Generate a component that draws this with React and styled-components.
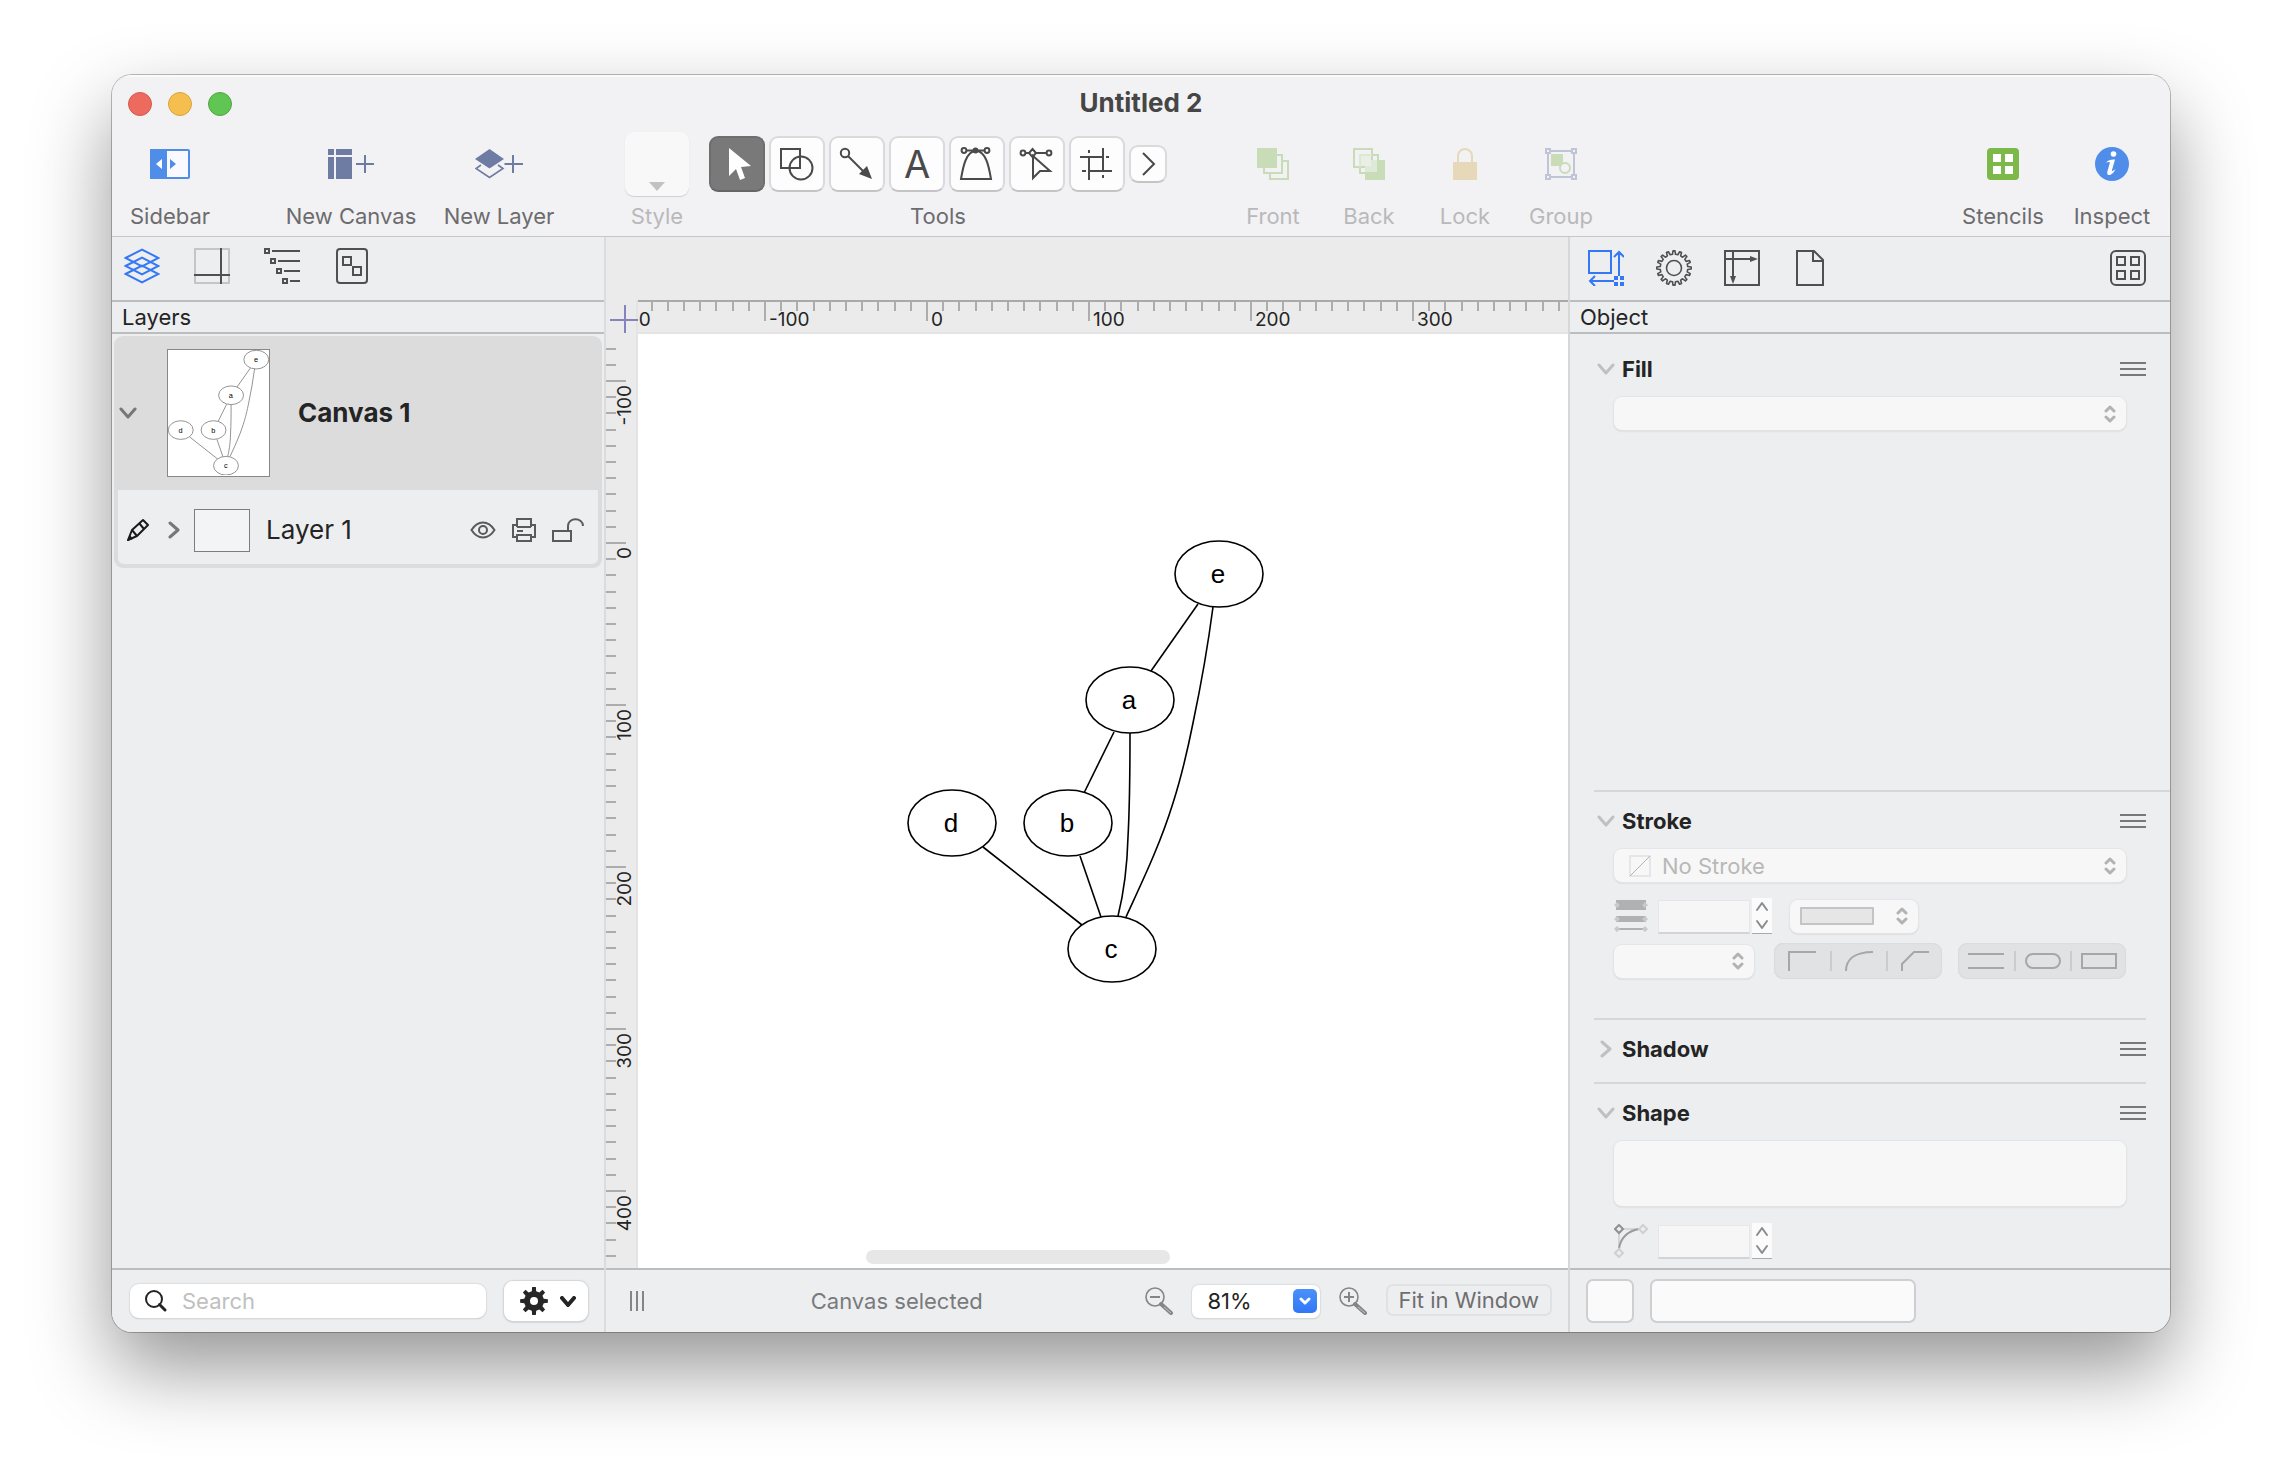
import React, { useLayoutEffect, useRef, useState } from "react";
import styled, { createGlobalStyle } from "styled-components";

const GlobalStyle = createGlobalStyle`
  * {
    box-sizing: border-box;
  }
  body {
    margin: 0;
    background: #fff;
    font-family: Inter, "Liberation Sans", sans-serif;
    font-size: 22px;
    line-height: 28px;
    color: #242424;
  }
  button, input, select {
    font: inherit;
    color: inherit;
    margin: 0;
    padding: 0;
    border: 0;
    background: none;
    outline: none;
  }
  svg {
    display: block;
    flex: none;
  }
`;

const Desktop = styled.div`
  display: flex;
  min-height: 100vh;
  padding: 75px 112px 148px;
  overflow: hidden;
`;

const Window = styled.div`
  flex: 1;
  min-width: 0;
  display: flex;
  flex-direction: column;
  border-radius: 20px;
  background: #edeef0;
  overflow: hidden;
  box-shadow: 0 0 0 1px rgba(0, 0, 0, 0.25), 0 36px 80px rgba(0, 0, 0, 0.42);
`;

/* ---------- header ---------- */

const Header = styled.header`
  background: #f2f2f4;
  border-bottom: 1px solid #c6c6c8;
  box-shadow: inset 0 2px 0 #fafafb;
`;

const TitleBar = styled.div`
  display: grid;
  grid-template-columns: 1fr auto 1fr;
  align-items: center;
  height: 57px;
  padding: 0 16px;
`;

const Lights = styled.div`
  display: flex;
  gap: 16px;
`;

const Light = styled.button`
  width: 24px;
  height: 24px;
  border-radius: 50%;
  background: ${({ $color }) => $color};
  border: 1px solid ${({ $edge }) => $edge};
`;

const Title = styled.h1`
  margin: 0;
  padding-bottom: 2px;
  font-size: 26px;
  font-weight: 700;
  color: #464646;
`;

const Toolbar = styled.div`
  display: flex;
  padding: 0 12px 6px;
`;

const Item = styled.div`
  display: flex;
  flex-direction: column;
  align-items: center;
  gap: 6px;
  flex: none;
  width: ${({ $width }) => $width};
  white-space: nowrap;
  color: ${({ $dim }) => ($dim ? "#b9b9bb" : "#6c6c6e")};
`;

const ItemButton = styled(Item).attrs({ as: "button" })``;

const IconArea = styled.span`
  display: flex;
  align-items: center;
  justify-content: center;
  gap: 4px;
  height: 64px;
`;

const Space = styled.div`
  flex: ${({ $flexible }) => ($flexible ? "1 1 0" : "none")};
  width: ${({ $width }) => $width || "0"};
`;

const StyleWell = styled.button`
  display: flex;
  align-items: flex-end;
  justify-content: center;
  width: 64px;
  height: 64px;
  padding-bottom: 5px;
  border-radius: 9px;
  background: #f8f8f9;
  box-shadow: 0 1px 1px #cfcfd1;
`;

const ToolButton = styled.button`
  display: flex;
  align-items: center;
  justify-content: center;
  width: ${({ $small }) => ($small ? "38px" : "56px")};
  height: ${({ $small }) => ($small ? "38px" : "56px")};
  border-radius: 9px;
  border: 2px solid ${({ $active }) => ($active ? "#6e6e6e" : "#dadadc")};
  border-bottom-color: ${({ $active }) => ($active ? "#666" : "#c4c4c6")};
  background: ${({ $active }) => ($active ? "#797979" : "#fdfdfd")};
  color: #4a4a4a;

  svg {
    margin: -2px;
  }
`;

const Letter = styled.span`
  font-size: 38px;
  line-height: 52px;
`;

/* ---------- body ---------- */

const Main = styled.div`
  flex: 1;
  display: grid;
  grid-template-columns: 494px minmax(0, 1fr) 602px;
`;

const Panel = styled.section`
  display: flex;
  flex-direction: column;
  min-width: 0;
  border-right: ${({ $side }) => ($side === "left" ? "2px solid #dadcde" : "0")};
  border-left: ${({ $side }) => ($side === "right" ? "2px solid #d6d7d9" : "0")};
`;

const Tabs = styled.nav`
  display: flex;
  align-items: center;
  gap: ${({ $gap }) => $gap};
  height: 65px;
  padding: ${({ $pad }) => $pad};
  border-bottom: 2px solid #bbbdbf;
`;

const Tab = styled.button`
  display: flex;
  justify-content: center;
  width: 36px;
  color: ${({ $active }) => ($active ? "#3478f6" : "#505050")};
  margin-left: ${({ $end }) => ($end ? "auto" : "0")};
`;

const Heading = styled.h2`
  margin: 0;
  padding: 1px 10px;
  font-size: 22px;
  font-weight: 400;
  border-bottom: 2px solid #bbbdbf;
`;

const PanelBody = styled.div`
  flex: 1;
  padding: ${({ $pad }) => $pad || "0"};
`;

const Footer = styled.footer`
  display: flex;
  align-items: center;
  height: 64px;
  gap: ${({ $gap }) => $gap || "16px"};
  padding: 0 ${({ $pad }) => $pad};
  border-top: 2px solid #bbbdbf;
  background: #edeef0;
`;

const CanvasGroup = styled.div`
  border-radius: 9px;
  background: #dcdcdc;
  padding: 0 4px 4px;
`;

const CanvasRow = styled.div`
  display: flex;
  align-items: center;
  height: 154px;
  font-size: 26px;
  font-weight: 700;
`;

const LayerRow = styled.div`
  display: flex;
  align-items: center;
  height: 74px;
  padding: 6px 14px 0 8px;
  background: #edeef0;
  border-radius: 0 0 6px 6px;
  font-size: 26px;
`;

const IconButton = styled.button`
  display: flex;
  align-items: center;
  justify-content: center;
  width: ${({ $width }) => $width};
  color: ${({ $color }) => $color || "#5a5a5a"};
`;

const Thumbnail = styled.span`
  display: block;
  width: 103px;
  height: 128px;
  margin: 0 28px 0 29px;
  border: 1px solid #888;
  background: #fff;
`;

const LayerThumb = styled.span`
  width: 56px;
  height: 43px;
  margin: 0 16px 0 14px;
  border: 1px solid #7d7d7d;
  background: #f3f4f6;
`;

const LayerName = styled.span`
  flex: 1;
`;

const LayerActions = styled.span`
  display: flex;
  align-items: center;
  gap: 16px;
`;

const SearchBox = styled.label`
  flex: 1;
  min-width: 0;
  display: flex;
  align-items: center;
  gap: 15px;
  height: 34px;
  padding: 0 15px;
  border-radius: 9px;
  background: #fff;
  box-shadow: 0 0 1px 1px #dcdddf, 0 1px 1px #a8a8a8;

  input {
    flex: 1;
    min-width: 0;
    height: 30px;
  }
  input::placeholder {
    color: #c0c0c0;
    opacity: 1;
  }
`;

const GearButton = styled.button`
  flex: none;
  display: flex;
  align-items: center;
  justify-content: center;
  gap: 12px;
  width: 84px;
  height: 40px;
  padding-left: 3px;
  border-radius: 9px;
  background: #fff;
  box-shadow: 0 0 1px 1px #d6d6d8, 0 1px 2px #aaa;
`;

/* ---------- centre ---------- */

const Workspace = styled.section`
  display: grid;
  grid-template-rows: 63px 34px 1fr auto;
  min-width: 0;
  background: #ebebeb;
`;

const RulerRow = styled.div`
  display: grid;
  grid-template-columns: 32px minmax(0, 1fr);
`;

const Corner = styled.div`
  display: flex;
  align-items: center;
  justify-content: center;
  padding: 4px 0 0 6px;
  border-right: 2px solid #e4e4e4;
`;

const TopRuler = styled.div`
  height: 34px;
  border-top: 2px solid #a9a9a9;
  border-bottom: 2px solid #e4e4e4;
  overflow: hidden;
`;

const SideRuler = styled.div`
  position: relative;
  border-right: 2px solid #e4e4e4;
  overflow: hidden;
`;

// the ruler drawing must never stretch the row it sits in
const SideRulerArt = styled.div`
  position: absolute;
  inset: 0;
`;

const Canvas = styled.div`
  position: relative;
  overflow: hidden;
  background: #fff;
`;

const GraphSpot = styled.div`
  position: absolute;
  left: 269px;
  top: 206px;
  width: 357px;
`;

const ScrollThumb = styled.div`
  position: absolute;
  left: 228px;
  bottom: 4px;
  width: 304px;
  height: 14px;
  border-radius: 7px;
  background: #e7e7e7;
`;

const Status = styled.span`
  flex: 1;
  padding-left: 4px;
  text-align: center;
  color: #7a7a7c;
`;

const ZoomBox = styled.div`
  position: relative;
  width: 128px;
  height: 33px;
  border-radius: 7px;
  background: #fff;
  box-shadow: 0 0 1px 1px #dcdddf, 0 1px 1px #a8a8a8;

  select {
    appearance: none;
    width: 100%;
    height: 33px;
    padding-left: 16px;
  }
`;

const ZoomArrow = styled.span`
  position: absolute;
  right: 3px;
  top: 4px;
  display: flex;
  align-items: center;
  justify-content: center;
  width: 24px;
  height: 24px;
  border-radius: 5px;
  background: linear-gradient(#4a92f8, #3176f6);
  color: #fff;
  pointer-events: none;
`;

const FitButton = styled.button`
  height: 32px;
  line-height: 26px;
  margin-bottom: 2px;
  padding: 0 11px;
  border: 2px solid #e0e1e3;
  border-radius: 7px;
  color: #6e6e70;
  white-space: nowrap;
`;

/* ---------- inspector ---------- */

const Section = styled.section`
  margin: 0 ${({ $wide }) => ($wide ? "0" : "24px")} 0 24px;
  padding: 14px ${({ $wide }) => ($wide ? "24px" : "0")} ${({ $bottom }) => $bottom || "0"} 0;
  border-bottom: ${({ $last }) => ($last ? "0" : "2px solid #d6d7d9")};
`;

const FillSection = styled(Section)`
  min-height: 458px;
  padding-top: 20px;
`;

const SectionTitle = styled.div`
  display: flex;
  align-items: center;
  gap: 4px;
  height: 29px;

  h3 {
    flex: 1;
    margin: 0;
    font-size: 22px;
    font-weight: 700;
  }
`;

const Fields = styled.div`
  display: flex;
  flex-direction: column;
  gap: ${({ $gap }) => $gap || "0"};
  padding: ${({ $top }) => $top || "14px"} 20px 0;
`;

const FieldRow = styled.div`
  display: flex;
  align-items: center;
  height: 36px;
`;

const Popup = styled.div`
  position: relative;
  display: flex;
  align-items: center;
  width: ${({ $width }) => $width || "100%"};
  height: 33px;
  margin-left: ${({ $left }) => $left || "0"};
  border-radius: 8px;
  background: #f7f7f7;
  box-shadow: 0 0 1px 1px #e4e5e7, 0 1px 2px #c4c4c6;

  select {
    appearance: none;
    width: 100%;
    height: 33px;
    padding-left: ${({ $indent }) => $indent || "12px"};
    color: #b8b8b8;
    opacity: 1;
  }
`;

const PopupArrows = styled.span`
  position: absolute;
  right: 10px;
  pointer-events: none;
`;

const PopupPicture = styled.span`
  position: absolute;
  left: ${({ $left }) => $left};
  pointer-events: none;
`;

const NumberBox = styled.input`
  width: 92px;
  height: 34px;
  margin: 2px 2px 0 10px;
  background: #f6f6f6;
  border: 1px solid #e6e6e8;
  border-bottom: 2px solid #d4d4d6;
`;

const Stepper = styled.div`
  display: flex;
  flex-direction: column;
  width: 20px;
  height: 36px;
  background: #fbfbfb;
  border-bottom: 1px solid #aaa;
`;

const StepButton = styled.button`
  flex: 1;
  display: flex;
  align-items: center;
  justify-content: center;
  color: #8c8c8c;
`;

const Segments = styled.div`
  display: flex;
  flex: 1;
  height: 36px;
  margin-left: ${({ $left }) => $left};
  border-radius: 9px;
  background: #e1e2e4;
  box-shadow: inset 0 0 2px #cbccce;
`;

const Segment = styled.button`
  flex: 1;
  display: flex;
  align-items: center;
  justify-content: center;
  color: #a6a7a9;

  & + &::before {
    content: "";
    width: 2px;
    height: 20px;
    margin-right: auto;
    background: #cbccce;
  }
  & + & svg {
    margin-right: auto;
  }
`;

const ShapeWell = styled.button`
  height: 65px;
  border-radius: 8px;
  background: #f7f7f7;
  box-shadow: 0 0 1px 1px #e4e5e7, 0 1px 2px #c4c4c6;
`;

const FooterWell = styled.button`
  width: ${({ $width }) => $width};
  height: 44px;
  border: 2px solid #cfcfd1;
  border-radius: 7px;
  background: #fafafa;
`;

/* ---------- drawings ---------- */

const Svg = ({ w, h, children, ...rest }) => (
  <svg width={w} height={h} viewBox={`0 0 ${w} ${h}`} fill="none" stroke="currentColor" strokeWidth="2" aria-hidden="true" {...rest}>
    {children}
  </svg>
);

// foot and tip are the half widths of a tooth, as a share of the pitch
const gearPath = (teeth, c, outer, inner, foot, tip) => {
  const step = (Math.PI * 2) / teeth;
  const at = (r, a) => `${(c + r * Math.sin(a)).toFixed(2)} ${(c - r * Math.cos(a)).toFixed(2)}`;
  let d = "";
  for (let i = 0; i < teeth; i++) {
    const a = i * step;
    d += `${i ? "L" : "M"}${at(inner, a - step * foot)}L${at(outer, a - step * tip)}L${at(outer, a + step * tip)}L${at(inner, a + step * foot)}`;
  }
  return d + "Z";
};

const Chevron = ({ w = 16, h = 10, dir = "down", stroke = 3 }) => {
  const d = {
    down: `M2 2L${w / 2} ${h - 2}L${w - 2} 2`,
    up: `M2 ${h - 2}L${w / 2} 2L${w - 2} ${h - 2}`,
    right: `M2 2L${w - 2} ${h / 2}L2 ${h - 2}`,
  }[dir];
  return <Svg w={w} h={h} strokeWidth={stroke} strokeLinecap="round" strokeLinejoin="round"><path d={d} /></Svg>;
};

const UpDown = () => (
  <Svg w={12} h={18} stroke="#b2b2b2" strokeWidth="3" strokeLinecap="round" strokeLinejoin="round">
    <path d="M2 6L6 2L10 6M2 12L6 16L10 12" />
  </Svg>
);

const MenuLines = () => (
  <Svg w={26} h={14} stroke="#77787a"><path d="M0 1H26M0 7H26M0 13H26" /></Svg>
);

const nodes = [
  { id: "e", x: 312, y: 34 },
  { id: "a", x: 223, y: 160 },
  { id: "b", x: 161, y: 283 },
  { id: "d", x: 45, y: 283 },
  { id: "c", x: 205, y: 409 },
];

const edges = [
  "M291 64L244 131",
  "M207 192L177 253",
  "M223 193C223 230 223 260 221 297C220 335 215 360 211 376",
  "M306 67C301 105 294 145 286 183C279 218 274 238 266 263C253 305 235 342 219 377",
  "M76 307L175 385",
  "M173 316L194 377",
];

const Graph = ({ color = "#000", strokeWidth = 1.6 }) => (
  <svg viewBox="0 0 357 443" width="100%" role="img" aria-label="Graph">
    <g fill="none" stroke={color} strokeWidth={strokeWidth}>
      {edges.map((d) => <path key={d} d={d} />)}
      {nodes.map(({ id, x, y }) => <ellipse key={id} cx={x} cy={y} rx="44" ry="33" fill="#fff" />)}
    </g>
    <g fill="#000" fontFamily="Liberation Sans, sans-serif" fontWeight="400" fontSize="26" textAnchor="middle">
      {nodes.map(({ id, x, y }) => <text key={id} x={x - 1} y={y + 9}>{id}</text>)}
    </g>
  </svg>
);

// 100 ruler units take 162px at the current zoom
const UNIT = 162;

const useLength = (side) => {
  const ref = useRef(null);
  const [length, setLength] = useState(0);
  useLayoutEffect(() => {
    const measure = () => setLength(ref.current.getBoundingClientRect()[side]);
    measure();
    const observer = new ResizeObserver(measure);
    observer.observe(ref.current);
    return () => observer.disconnect();
  }, [side]);
  return [ref, length];
};

const ticks = (origin, length) => {
  const list = [];
  for (let i = -20; origin + (i * UNIT) / 10 < length; i++) {
    list.push({ at: Math.round(origin + (i * UNIT) / 10), major: i % 10 === 0, value: i * 10 });
  }
  return list;
};

const HorizontalRuler = () => {
  const [ref, length] = useLength("width");
  return (
    <svg ref={ref} width="100%" height="30" fontSize="19" fill="#242424">
      {ticks(289, length).map(({ at, major, value }) => (
        <g key={value}>
          <rect x={at - 1} y="0" width="2" height={major ? 19 : 9} fill="#adadad" />
          {major && <text x={at + 4} y="24">{value}</text>}
        </g>
      ))}
    </svg>
  );
};

const VerticalRuler = () => {
  const [ref, length] = useLength("height");
  return (
    <svg ref={ref} width="30" height="100%" fontSize="19" fill="#242424">
      {ticks(209, length).filter((t) => t.at > 0).map(({ at, major, value }) => (
        <g key={value}>
          <rect x="0" y={at - 1} width={major ? 20 : 10} height="2" fill="#adadad" />
          {major && <text transform={`translate(25 ${at + 4}) rotate(-90)`} textAnchor="end">{value}</text>}
        </g>
      ))}
    </svg>
  );
};

const toolIcons = [
  ["Select", <path key="p" d="M20 12L42 30L32 31L36 42L31 44L27 33L20 40Z" fill="#fff" stroke="none" />],
  ["Shape", <g key="p"><rect x="12" y="13" width="19" height="19" /><circle cx="32" cy="32" r="11.5" /></g>],
  ["Line", <g key="p"><circle cx="16" cy="17" r="4.2" /><path d="M19 20L35 36" /><path d="M43 43L38 30L30 38Z" fill="currentColor" stroke="none" /></g>],
  ["Text", null],
  ["Pen", <g key="p"><circle cx="15" cy="14.5" r="2.4" /><circle cx="38" cy="14.5" r="2.4" /><circle cx="26.5" cy="14.5" r="3" fill="currentColor" stroke="none" /><path d="M17 14.5H36M12 43C14 31 17 15 27 15S40 31 42 43Z" /></g>],
  ["Point Editor", <g key="p"><circle cx="14" cy="17" r="2.4" /><circle cx="40" cy="17" r="2.4" /><path d="M16 17H20M27 17H38M23.5 13L27 17L23.5 21L20 17Z" /><path d="M24 20V42L31 35H41Z" /></g>],
  ["Artboard", <path key="p" d="M11 21H35M37 21H40M20 21V44M20 14V17M34 12V36M34 39V42M20 35H43M13 35H17" />],
];

const Tools = () => (
  <IconArea>
    {toolIcons.map(([name, art], i) => (
      <ToolButton key={name} aria-label={name} $active={i === 0}>
        {art ? <Svg w={56} h={56}>{art}</Svg> : <Letter>A</Letter>}
      </ToolButton>
    ))}
    <ToolButton aria-label="More tools" $small>
      <Svg w={38} h={38}><path d="M14 8L25 19L14 30" /></Svg>
    </ToolButton>
  </IconArea>
);

const SidebarIcon = () => (
  <Svg w={40} h={30} stroke="#4f8de8">
    <rect x="1" y="1" width="38" height="28" rx="1" fill="#f9faff" />
    <path d="M1 1H16V29H1Z" fill="#4f8de8" />
    <path d="M12 10V20L6 15Z" fill="#fff" stroke="none" />
    <path d="M20 10V20L26 15Z" fill="#4f8de8" stroke="none" />
  </Svg>
);

const NewCanvasIcon = () => (
  <Svg w={46} h={30} stroke="#6e7ca3">
    <path d="M0 0H6V6H0ZM8 0H24V6H8ZM0 8H6V30H0ZM8 8H24V30H8Z" fill="#6e7ca3" stroke="none" />
    <path d="M28 15H46M37 6V24" />
  </Svg>
);

const NewLayerIcon = () => (
  <Svg w={48} h={30} stroke="#6e7ca3">
    <path d="M0 10L14.5 0L29 10L14.5 19.5Z" fill="#6e7ca3" stroke="none" />
    <path d="M6 16L1 19.5L14.5 28.5L28 19.5L23 16" strokeWidth="1.6" />
    <path d="M29.5 15H48M38 6V24" />
  </Svg>
);

const FrontIcon = () => (
  <Svg w={32} h={32} stroke="#c9dcb8">
    <rect x="13" y="13" width="18" height="18" />
    <rect x="7" y="7" width="18" height="18" fill="#f2f2f4" />
    <rect x="0" y="0" width="20" height="20" fill="#c9dcb8" stroke="none" />
  </Svg>
);

const BackIcon = () => (
  <Svg w={32} h={32} stroke="#c9dcb8">
    <rect x="1" y="1" width="18" height="18" />
    <path d="M7 25V7H25V25Z" />
    <rect x="12" y="12" width="20" height="20" fill="#c9dcb8" stroke="none" />
    <path d="M7 19V7H19" stroke="#dde8d3" />
    <rect x="12" y="12" width="12" height="12" fill="#dfe9d7" stroke="none" />
    <rect x="8" y="8" width="10" height="10" fill="#e9efe5" stroke="none" />
  </Svg>
);

const LockIcon = () => (
  <Svg w={24} h={32} stroke="#e6d8b8">
    <rect y="14" width="24" height="18" fill="#e6d8b8" stroke="none" />
    <path d="M5 14V8A7 7 0 0 1 19 8V14" />
  </Svg>
);

const GroupIcon = () => (
  <Svg w={32} h={32} stroke="#bfc4d6">
    <path d="M3 3H29V29H3Z" />
    <path d="M1 1H5V5H1ZM27 1H31V5H27ZM1 27H5V31H1ZM27 27H31V31H27Z" fill="#f2f2f4" />
    <rect x="6" y="6" width="12" height="12" fill="#c9dcb8" stroke="none" />
    <circle cx="20" cy="20" r="5" fill="#f2f2f4" stroke="#c9dcb8" />
  </Svg>
);

const StencilsIcon = () => (
  <Svg w={32} h={32} stroke="none">
    <rect width="32" height="32" rx="4" fill="#7cb84a" />
    <path d="M6 6H14V14H6ZM18 6H26V14H18ZM6 18H14V26H6ZM18 18H26V26H18Z" fill="#fff" />
  </Svg>
);

const InspectIcon = () => (
  <Svg w={34} h={34} stroke="none">
    <circle cx="17" cy="17" r="17" fill="#4f8de8" />
    <circle cx="18.5" cy="7" r="2.8" fill="#fff" />
    <path d="M11 15.5C13 13 17 12 20 12.5L17 23C16.7 24.5 17.5 24.5 20.5 22C19 26 15.5 28.5 13.5 28C12 27.6 12 26 12.5 24L14.8 16C15 15 14 14.5 11 15.5Z" fill="#fff" />
  </Svg>
);

const LayersTab = () => (
  <Svg w={36} h={36}>
    <path d="M1.5 10L18 1.5L34.5 10L18 18.5ZM1.5 18L18 9.5L34.5 18L18 26.5ZM1.5 26L18 17.5L34.5 26L18 34.5Z" />
  </Svg>
);

const GuidesTab = () => (
  <Svg w={36} h={36}>
    <rect x="1" y="1" width="34" height="34" stroke="#c4c5c7" />
    <path d="M0 27H36M27 0V36" />
  </Svg>
);

const OutlineTab = () => (
  <Svg w={36} h={36}>
    <path d="M1 1H5V5H1ZM7 11H11V15H7ZM13 21H17V25H13ZM19 31H23V35H19ZM8 3H36M14 13H36M20 23H36M26 33H36" />
  </Svg>
);

const SelectionTab = () => (
  <Svg w={32} h={36}>
    <rect x="1" y="1" width="30" height="34" rx="3" />
    <path d="M7 9H15V17H7ZM17 19H25V27H17Z" />
  </Svg>
);

const ObjectTab = () => (
  <Svg w={36} h={36}>
    <path d="M1 1H23V23H1ZM31 26V3M26 7L31 2L36 7M26 31H3M7 26L2 31L7 36" />
    <path d="M26 26H30V30H26ZM32 26H36V30H32ZM26 32H30V36H26ZM32 32H36V36H32Z" fill="currentColor" stroke="none" />
  </Svg>
);

const PropertiesTab = () => (
  <Svg w={36} h={36} strokeWidth="1.6" strokeLinejoin="round">
    <path d={gearPath(16, 18, 17.2, 13.8, 0.28, 0.15)} />
    <circle cx="18" cy="18" r="7.5" />
  </Svg>
);

const CanvasTab = () => (
  <Svg w={36} h={36}>
    <path d="M1 1H35V35H1ZM9 1V28M1 9H28" />
    <path d="M34 9L26 6V12ZM9 34L6 26H12Z" fill="currentColor" stroke="none" />
  </Svg>
);

const DocumentTab = () => (
  <Svg w={28} h={36}>
    <path d="M1 1H18L27 10V35H1ZM17 1V11H27" />
  </Svg>
);

const StencilTab = () => (
  <Svg w={36} h={36}>
    <rect x="1" y="1" width="34" height="34" rx="5" />
    <path d="M7 7H15V15H7ZM21 7H29V15H21ZM7 21H15V29H7ZM21 21H29V29H21Z" />
  </Svg>
);

const PencilIcon = () => (
  <Svg w={22} h={24} stroke="#1a1a1a" strokeLinejoin="round">
    <path d="M1 22L5 12L16 2L21 7L10 18ZM5 12L10 18M12 5L17 11" />
    <path d="M0 23L3 17L6 21Z" fill="#1a1a1a" stroke="none" />
  </Svg>
);

const EyeIcon = () => (
  <Svg w={26} h={18}><path d="M1.5 9C5 3.5 9 1.5 13 1.5S21 3.5 24.5 9C21 14.5 17 16.5 13 16.5S5 14.5 1.5 9Z" /><circle cx="13" cy="9" r="4" /></Svg>
);

const PrinterIcon = () => (
  <Svg w={24} h={24}><path d="M5 9V1H19V9M5 19H1V7H5M19 7H23V19H19M5 9H19M5 17H19V23H5ZM5 13H11" /></Svg>
);

const UnlockIcon = () => (
  <Svg w={32} h={24}><path d="M1 13H19V23H1ZM16 13V8C16 -1 31 -1 31 8" /></Svg>
);

const SearchIcon = () => (
  <Svg w={22} h={22} stroke="#242424"><circle cx="9" cy="9" r="8" /><path d="M14.5 14.5L20 20" strokeWidth="3" strokeLinecap="round" /></Svg>
);

const SolidGear = () => (
  <Svg w={28} h={28} stroke="none" fill="#262626" fillRule="evenodd">
    <path d={gearPath(8, 14, 14, 10, 0.28, 0.17) + "M18 14A4 4 0 1 0 10 14A4 4 0 1 0 18 14Z"} />
  </Svg>
);

const ZoomIcon = ({ plus }) => (
  <Svg w={28} h={28} stroke="#858587">
    <circle cx="10" cy="10" r="9" strokeWidth="1.6" />
    <path d={plus ? "M5 10H15M10 5V15" : "M5 10H15"} />
    <path d="M16 17L26 26" strokeWidth="4" strokeLinecap="round" />
    <path d="M19 20L26 26" stroke="#c4c5c7" strokeWidth="1" />
  </Svg>
);

const ThicknessIcon = () => (
  <Svg w={34} h={32} stroke="none" fill="#b0b1b3">
    <path d="M2 0H32V10H2ZM2 16H32V22H2ZM2 28H32V30H2Z" />
    <g fill="#c8c9cb">
      <path d="M0 5L3 2L6 5L3 8ZM28 5L31 2L34 5L31 8ZM0 19L3 16L6 19L3 22ZM28 19L31 16L34 19L31 22ZM0 29L3 26L6 29L3 32ZM28 29L31 26L34 29L31 32Z" />
    </g>
  </Svg>
);

const CornerIcon = () => (
  <Svg w={34} h={34}>
    <path d="M5 9V25M9 5H25" stroke="#d4d5d7" />
    <path d="M5 25C6 15 13 7 25 5" stroke="#9a9b9d" />
    <path d="M5 1L9 5L5 9L1 5Z" stroke="#8f9092" />
    <path d="M29 1L33 5L29 9L25 5ZM5 25L9 29L5 33L1 29Z" stroke="#cfd0d2" />
  </Svg>
);

/* ---------- pieces ---------- */

const PopupField = ({ label, width, left, indent, text, picture, pictureLeft }) => (
  <Popup $width={width} $left={left} $indent={indent}>
    <select aria-label={label} disabled defaultValue="">
      <option value="">{text}</option>
    </select>
    {picture && <PopupPicture $left={pictureLeft}>{picture}</PopupPicture>}
    <PopupArrows><UpDown /></PopupArrows>
  </Popup>
);

const NumberField = ({ label }) => (
  <>
    <NumberBox aria-label={label} disabled />
    <Stepper>
      <StepButton aria-label={`Increase ${label}`}><Chevron w={14} h={11} dir="up" stroke={2} /></StepButton>
      <StepButton aria-label={`Decrease ${label}`}><Chevron w={14} h={11} stroke={2} /></StepButton>
    </Stepper>
  </>
);

const SectionHead = ({ title, closed }) => (
  <SectionTitle>
    <IconButton $width="24px" $color="#bfc0c2" aria-label={`Toggle ${title}`}>
      {closed ? <Chevron w={12} h={18} dir="right" /> : <Chevron w={18} h={12} />}
    </IconButton>
    <h3>{title}</h3>
    <IconButton $width="26px" aria-label={`${title} menu`}><MenuLines /></IconButton>
  </SectionTitle>
);

const SegmentGroup = ({ left, items }) => (
  <Segments $left={left}>
    {items.map(([label, d]) => (
      <Segment key={label} aria-label={label}><Svg w={36} h={20}><path d={d} /></Svg></Segment>
    ))}
  </Segments>
);

const corners = [
  ["Miter corner", "M5 20V1H32"],
  ["Round corner", "M5 20C5 9 13 1 32 1"],
  ["Bevel corner", "M5 20V13L17 1H32"],
];

const caps = [
  ["Butt cap", "M0 3H36M0 17H36"],
  ["Round cap", "M8 3H28A7 7 0 0 1 28 17H8A7 7 0 0 1 8 3Z"],
  ["Square cap", "M1 3H35V17H1Z"],
];

const Sidebar = () => (
  <Panel $side="left">
    <Tabs $gap="34px" $pad="0 12px 5px">
      <Tab $active aria-label="Layers"><LayersTab /></Tab>
      <Tab aria-label="Guides"><GuidesTab /></Tab>
      <Tab aria-label="Outline"><OutlineTab /></Tab>
      <Tab aria-label="Selection"><SelectionTab /></Tab>
    </Tabs>
    <Heading>Layers</Heading>
    <PanelBody $pad="2px">
      <CanvasGroup>
        <CanvasRow>
          <IconButton $width="20px" $color="#777" aria-label="Collapse canvas"><Chevron w={18} h={12} /></IconButton>
          <Thumbnail><Graph color="#777" strokeWidth={2.8} /></Thumbnail>
          Canvas 1
        </CanvasRow>
        <LayerRow>
          <IconButton $width="24px" aria-label="Edit layer"><PencilIcon /></IconButton>
          <Space $width="18px" />
          <IconButton $width="12px" $color="#777" aria-label="Expand layer"><Chevron w={12} h={18} dir="right" /></IconButton>
          <LayerThumb />
          <LayerName>Layer 1</LayerName>
          <LayerActions>
            <IconButton aria-label="Visible"><EyeIcon /></IconButton>
            <IconButton aria-label="Printable"><PrinterIcon /></IconButton>
            <IconButton aria-label="Unlocked"><UnlockIcon /></IconButton>
          </LayerActions>
        </LayerRow>
      </CanvasGroup>
    </PanelBody>
    <Footer $pad="16px 0 18px" $gap="18px">
      <SearchBox>
        <SearchIcon />
        <input type="text" placeholder="Search" aria-label="Search" />
      </SearchBox>
      <GearButton aria-label="Actions"><SolidGear /><Chevron w={16} h={11} stroke={4} /></GearButton>
    </Footer>
  </Panel>
);

const Center = () => (
  <Workspace>
    <div />
    <RulerRow>
      <Corner><Svg w={28} h={28} stroke="#8384bd"><path d="M0 15H28M15 0V28" /></Svg></Corner>
      <TopRuler><HorizontalRuler /></TopRuler>
    </RulerRow>
    <RulerRow>
      <SideRuler><SideRulerArt><VerticalRuler /></SideRulerArt></SideRuler>
      <Canvas>
        <GraphSpot><Graph /></GraphSpot>
        <ScrollThumb />
      </Canvas>
    </RulerRow>
    <Footer $pad="16px 0 23px" $gap="19px">
      <IconButton $width="16px" aria-label="Resize sidebar"><Svg w={16} h={20} stroke="#858587"><path d="M2 0V20M8 0V20M14 0V20" /></Svg></IconButton>
      <Status>Canvas selected</Status>
      <IconButton aria-label="Zoom out"><ZoomIcon /></IconButton>
      <ZoomBox>
        <select aria-label="Zoom" defaultValue="81%"><option>81%</option></select>
        <ZoomArrow><Chevron w={12} h={8} stroke={3} /></ZoomArrow>
      </ZoomBox>
      <IconButton aria-label="Zoom in"><ZoomIcon plus /></IconButton>
      <FitButton>Fit in Window</FitButton>
    </Footer>
  </Workspace>
);

const Inspector = () => (
  <Panel $side="right">
    <Tabs $gap="32px" $pad="0 24px 1px 18px">
      <Tab $active aria-label="Object"><ObjectTab /></Tab>
      <Tab aria-label="Properties"><PropertiesTab /></Tab>
      <Tab aria-label="Canvas"><CanvasTab /></Tab>
      <Tab aria-label="Document"><DocumentTab /></Tab>
      <Tab $end aria-label="Stencils"><StencilTab /></Tab>
    </Tabs>
    <Heading>Object</Heading>
    <PanelBody>
      <FillSection $wide>
        <SectionHead title="Fill" />
        <Fields><PopupField label="Fill type" /></Fields>
      </FillSection>
      <Section $bottom="39px">
        <SectionHead title="Stroke" />
        <Fields>
          <PopupField
            label="Stroke type"
            text="No Stroke"
            indent="48px"
            pictureLeft="15px"
            picture={<Svg w={22} h={22} stroke="#e6e6e8"><rect x="1" y="1" width="20" height="20" /><path d="M1 21L21 1" stroke="#b4b4b4" strokeWidth="1" /></Svg>}
          />
        </Fields>
        <Fields $gap="9px" $top="16px">
          <FieldRow>
            <ThicknessIcon />
            <NumberField label="stroke thickness" />
            <PopupField
              label="Stroke color"
              width="128px"
              left="18px"
              pictureLeft="10px"
              picture={<Svg w={74} h={18} stroke="#c4c4c6"><rect x="1" y="1" width="72" height="16" fill="#e6e6e6" /></Svg>}
            />
          </FieldRow>
          <FieldRow>
            <PopupField label="Stroke pattern" width="140px" />
            <SegmentGroup left="20px" items={corners} />
            <SegmentGroup left="16px" items={caps} />
          </FieldRow>
        </Fields>
      </Section>
      <Section $bottom="19px">
        <SectionHead title="Shadow" closed />
      </Section>
      <Section $last>
        <SectionHead title="Shape" />
        <Fields $gap="17px">
          <ShapeWell aria-label="Shape" />
          <FieldRow>
            <CornerIcon />
            <NumberField label="corner radius" />
          </FieldRow>
        </Fields>
      </Section>
    </PanelBody>
    <Footer $pad="16px"><FooterWell $width="48px" aria-label="Style sample" /><FooterWell $width="266px" aria-label="Style name" /></Footer>
  </Panel>
);

const App = () => (
  <>
    <GlobalStyle />
    <Desktop>
      <Window>
        <Header>
          <TitleBar>
            <Lights>
              <Light aria-label="Close" $color="#ed6a5e" $edge="#d5594d" />
              <Light aria-label="Minimize" $color="#f5bf4f" $edge="#d9a33c" />
              <Light aria-label="Zoom window" $color="#61c554" $edge="#4fa73f" />
            </Lights>
            <Title>Untitled 2</Title>
          </TitleBar>
          <Toolbar>
            <ItemButton $width="92px"><IconArea><SidebarIcon /></IconArea>Sidebar</ItemButton>
            <Space $width="68px" />
            <ItemButton $width="134px"><IconArea><NewCanvasIcon /></IconArea>New Canvas</ItemButton>
            <Space $width="14px" />
            <ItemButton $width="134px"><IconArea><NewLayerIcon /></IconArea>New Layer</ItemButton>
            <Space $width="56px" />
            <Item $width="70px" $dim>
              <StyleWell aria-label="Style"><Svg w={16} h={9} stroke="none" fill="#c2c2c4"><path d="M0 0H16L8 9Z" /></Svg></StyleWell>
              Style
            </Item>
            <Space $width="16px" />
            <Item $width="460px"><Tools />Tools</Item>
            <Space $width="57px" />
            <ItemButton $width="96px" $dim><IconArea><FrontIcon /></IconArea>Front</ItemButton>
            <ItemButton $width="96px" $dim><IconArea><BackIcon /></IconArea>Back</ItemButton>
            <ItemButton $width="96px" $dim><IconArea><LockIcon /></IconArea>Lock</ItemButton>
            <ItemButton $width="96px" $dim><IconArea><GroupIcon /></IconArea>Group</ItemButton>
            <Space $flexible />
            <ItemButton $width="94px"><IconArea><StencilsIcon /></IconArea>Stencils</ItemButton>
            <Space $width="16px" />
            <ItemButton $width="92px"><IconArea><InspectIcon /></IconArea>Inspect</ItemButton>
          </Toolbar>
        </Header>
        <Main>
          <Sidebar />
          <Center />
          <Inspector />
        </Main>
      </Window>
    </Desktop>
  </>
);

export default App;
